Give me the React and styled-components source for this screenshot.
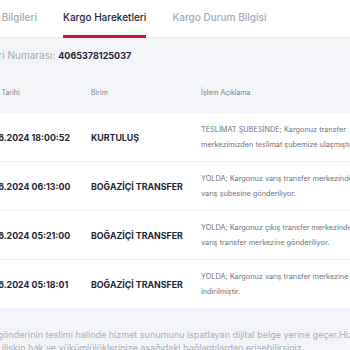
import React from 'react';
import styled, { createGlobalStyle } from 'styled-components';

const GlobalStyle = createGlobalStyle`
  html, body {
    margin: 0;
    padding: 0;
    background: #f3f5f9;
    font-family: Inter, "Noto Sans", sans-serif;
  }
`;

const Viewport = styled.div`
  width: 350px;
  height: 350px;
  overflow: hidden;
  background: #f3f5f9;
`;

const Page = styled.div`
  width: 480px;
  margin-left: -60px;
`;

const Tabs = styled.div`
  display: flex;
  gap: 26px;
  height: 37px;
  padding-left: 21px;
  background: #ffffff;
  border-bottom: 1px solid #e6e9ef;
`;

const Tab = styled.div`
  display: flex;
  align-items: center;
  font-size: 10px;
  font-weight: 500;
  color: ${p => (p.active ? '#1d2433' : '#a4a9b4')};
  border-bottom: 3px solid ${p => (p.active ? '#d0112b' : 'transparent')};
  padding-bottom: 2px;
  box-sizing: border-box;
  height: 38px;
`;

const Info = styled.div`
  padding: 11px 0 0 27px;
  height: 19px;
  font-size: 10px;
  color: #a4a9b4;
  b {
    font-size: 9px;
    color: #1d2433;
    font-weight: 700;
    margin-left: 3px;
  }
`;

const Table = styled.div`
  padding-left: 42px;
`;

const HeadRow = styled.div`
  display: grid;
  grid-template-columns: 109px 110px 168px;
  align-items: center;
  height: 45px;
  padding-top: 3px;
  box-sizing: border-box;
  font-size: 7px;
  color: #7d828c;
`;

const Row = styled.div`
  display: grid;
  grid-template-columns: 109px 110px 168px;
  align-items: center;
  height: 48px;
  background: #ffffff;
  border-bottom: 1px solid #eef0f4;
`;

const Bold = styled.div`
  font-size: 8.8px;
  font-weight: 700;
  color: #1d2433;
`;

const Desc = styled.div`
  font-size: 7.3px;
  line-height: 15px;
  color: #6d727c;
`;

const Footer = styled.div`
  padding: 19px 0 0 15px;
  font-size: 9px;
  line-height: 13px;
  color: #a9adb6;
  white-space: nowrap;
`;

const moves = [
  { date: '11.06.2024 18:00:52', unit: 'KURTULUŞ', text: 'TESLİMAT ŞUBESİNDE; Kargonuz transfer merkezimizden teslimat şubemize ulaşmıştır.' },
  { date: '11.06.2024 06:13:00', unit: 'BOĞAZİÇİ TRANSFER', text: 'YOLDA; Kargonuz varış transfer merkezinden varış şubesine gönderiliyor.' },
  { date: '11.06.2024 05:21:00', unit: 'BOĞAZİÇİ TRANSFER', text: 'YOLDA; Kargonuz çıkış transfer merkezinden varış transfer merkezine gönderiliyor.' },
  { date: '11.06.2024 05:18:01', unit: 'BOĞAZİÇİ TRANSFER', text: 'YOLDA; Kargonuz varış transfer merkezine indirilmiştir.' },
];

const App = () => {
  return (
    <Viewport>
      <GlobalStyle />
      <Page>
        <Tabs>
          <Tab>Gönderi Bilgileri</Tab>
          <Tab active>Kargo Hareketleri</Tab>
          <Tab>Kargo Durum Bilgisi</Tab>
        </Tabs>
        <Info>
          Gönderi Numarası:<b>4065378125037</b>
        </Info>
        <Table>
          <HeadRow>
            <span>İşlem Tarihi</span>
            <span>Birim</span>
            <span>İşlem Açıklama</span>
          </HeadRow>
          {moves.map(m => (
            <Row key={m.date}>
              <Bold>{m.date}</Bold>
              <Bold>{m.unit}</Bold>
              <Desc>{m.text}</Desc>
            </Row>
          ))}
        </Table>
        <Footer>
          Bu belge, gönderinin teslimi halinde hizmet sunumunu ispatlayan dijital belge yerine geçer.Hizmet
          <br />
          sunumuna ilişkin hak ve yükümlülüklerinize aşağıdaki bağlantılardan erişebilirsiniz.
        </Footer>
      </Page>
    </Viewport>
  );
};

export default App;
